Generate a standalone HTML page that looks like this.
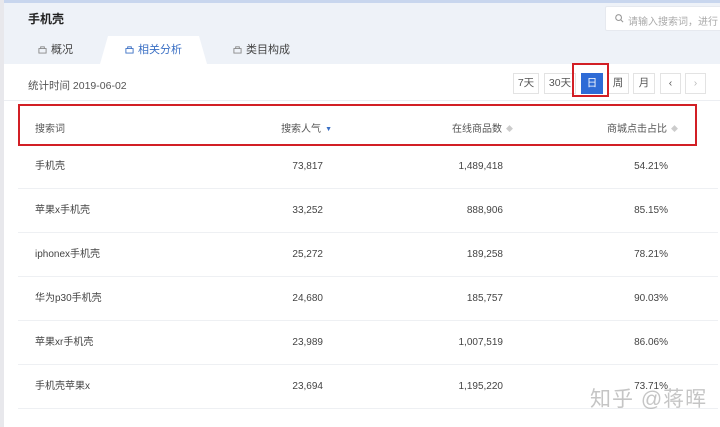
<!DOCTYPE html>
<html><head><meta charset="utf-8"><style>
*{margin:0;padding:0;box-sizing:border-box}
body{width:720px;height:427px;overflow:hidden;background:#fff;font-family:"Liberation Sans","Noto Sans CJK SC",sans-serif;color:#333;position:relative}
.top{position:absolute;left:0;top:0;width:720px;height:64px;background:#eef2f8}
.bar{position:absolute;left:0;top:0;width:720px;height:3px;background:#c8d6ee}
.lstrip{position:absolute;left:0;top:0;width:4px;height:427px;background:#e8e8ec}
.title{position:absolute;left:28px;top:10px;font-size:12px;font-weight:bold;color:#222}
.search{position:absolute;left:605px;top:6px;width:120px;height:25px;background:#fff;border:1px solid #e6e9ef;border-radius:2px;font-size:10px;color:#aaa;padding:6px 0 0 22px;white-space:nowrap;overflow:hidden}
.search svg{position:absolute;left:9px;top:7px}
.tab{position:absolute;top:41px;font-size:11px;color:#444}
.tab svg{vertical-align:-1px;margin-right:4px}
.atab{position:absolute;left:100px;top:36px;width:107px;height:28px;background:#fff;clip-path:polygon(8px 0,99px 0,107px 28px,0 28px);border-radius:6px 6px 0 0}
.stat{position:absolute;left:28px;top:78px;font-size:10.5px;color:#555}
.btn{position:absolute;top:73px;height:21px;border:1px solid #e3e3e3;font-size:10.5px;color:#555;text-align:center;line-height:19px;background:#fff}
.sep{position:absolute;left:4px;top:100px;width:716px;height:1px;background:#eceef2}
.red{position:absolute;border:2px solid #d21f25}
.row{position:absolute;left:18px;width:700px;height:44px;border-bottom:1px solid #eef0f3;font-size:10px;color:#444}
.row>b{position:absolute;top:0;line-height:43px;font-weight:normal;white-space:nowrap}
.c1{left:17px}.c2{right:395px}.c3{right:215px}.c4{right:50px}
.arr{font-size:7px;color:#ccc;margin-left:4px;vertical-align:1px}
.wm{position:absolute;left:590px;top:383px;font-size:21px;color:rgba(150,150,150,.55);letter-spacing:1px;white-space:nowrap}
</style></head><body>
<div class="top"></div><div class="bar"></div><div class="lstrip"></div>
<div class="title">手机壳</div>
<div class="search"><svg width="9" height="9" viewBox="0 0 10 10"><circle cx="4" cy="4" r="3.2" fill="none" stroke="#999" stroke-width="1.2"/><path d="M6.5 6.5L9 9" stroke="#999" stroke-width="1.2"/></svg>请输入搜索词，进行</div>
<div class="atab"></div>
<div class="tab" style="left:38px"><svg width="9" height="9" viewBox="0 0 10 10"><path d="M1 4h8v5H1zM3 4V2h4v2" fill="none" stroke="#888"/></svg>概况</div>
<div class="tab" style="left:125px;color:#3a6fc4"><svg width="9" height="9" viewBox="0 0 10 10"><path d="M1 4h8v5H1zM3 4V2h4v2" fill="none" stroke="#3a6fc4"/></svg>相关分析</div>
<div class="tab" style="left:233px"><svg width="9" height="9" viewBox="0 0 10 10"><path d="M1 4h8v5H1zM3 4V2h4v2" fill="none" stroke="#888"/></svg>类目构成</div>
<div class="stat">统计时间 2019-06-02</div>
<div class="btn" style="left:513px;width:26px">7天</div>
<div class="btn" style="left:544px;width:32px">30天</div>
<div class="btn" style="left:581px;width:22px;background:#2e6bd6;border-color:#2e6bd6;color:#fff">日</div>
<div class="btn" style="left:607px;width:22px">周</div>
<div class="btn" style="left:633px;width:22px">月</div>
<div class="btn" style="left:660px;width:21px">‹</div>
<div class="btn" style="left:685px;width:21px;color:#bbb">›</div>
<div class="red" style="left:572px;top:63px;width:37px;height:34px"></div>
<div class="sep"></div>
<div class="row" style="top:108px;border:none;color:#555"><b class="c1">搜索词</b><b style="right:386px">搜索人气<span class="arr" style="color:#3a6fc4">▼</span></b><b style="right:205px">在线商品数<span class="arr">◆</span></b><b style="right:40px">商城点击占比<span class="arr">◆</span></b></div>
<div class="red" style="left:18px;top:104px;width:679px;height:42px"></div>
<div class="row" style="top:145px"><b class="c1">手机壳</b><b class="c2">73,817</b><b class="c3">1,489,418</b><b class="c4">54.21%</b></div>
<div class="row" style="top:189px"><b class="c1">苹果x手机壳</b><b class="c2">33,252</b><b class="c3">888,906</b><b class="c4">85.15%</b></div>
<div class="row" style="top:233px"><b class="c1">iphonex手机壳</b><b class="c2">25,272</b><b class="c3">189,258</b><b class="c4">78.21%</b></div>
<div class="row" style="top:277px"><b class="c1">华为p30手机壳</b><b class="c2">24,680</b><b class="c3">185,757</b><b class="c4">90.03%</b></div>
<div class="row" style="top:321px"><b class="c1">苹果xr手机壳</b><b class="c2">23,989</b><b class="c3">1,007,519</b><b class="c4">86.06%</b></div>
<div class="row" style="top:365px"><b class="c1">手机壳苹果x</b><b class="c2">23,694</b><b class="c3">1,195,220</b><b class="c4">73.71%</b></div>
<div class="wm">知乎 @蒋晖</div>
</body></html>
